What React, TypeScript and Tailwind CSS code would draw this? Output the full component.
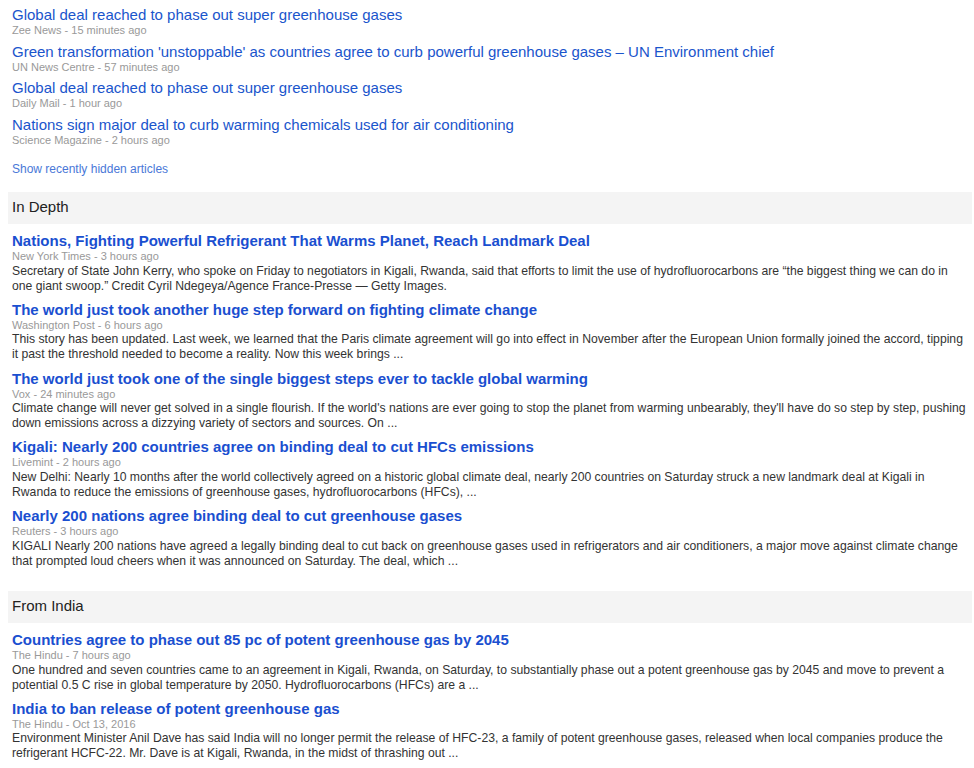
import React from 'react';

type Story = {
  title: string;
  source: string;
  time: string;
  snippet?: string;
};

const TOP: Story[] = [
  { title: 'Global deal reached to phase out super greenhouse gases', source: 'Zee News', time: '15 minutes ago' },
  {
    title: "Green transformation 'unstoppable' as countries agree to curb powerful greenhouse gases – UN Environment chief",
    source: 'UN News Centre',
    time: '57 minutes ago',
  },
  { title: 'Global deal reached to phase out super greenhouse gases', source: 'Daily Mail', time: '1 hour ago' },
  { title: 'Nations sign major deal to curb warming chemicals used for air conditioning', source: 'Science Magazine', time: '2 hours ago' },
];

const IN_DEPTH: Story[] = [
  {
    title: 'Nations, Fighting Powerful Refrigerant That Warms Planet, Reach Landmark Deal',
    source: 'New York Times',
    time: '3 hours ago',
    snippet:
      'Secretary of State John Kerry, who spoke on Friday to negotiators in Kigali, Rwanda, said that efforts to limit the use of hydrofluorocarbons are “the biggest thing we can do in one giant swoop.” Credit Cyril Ndegeya/Agence France-Presse — Getty Images.',
  },
  {
    title: 'The world just took another huge step forward on fighting climate change',
    source: 'Washington Post',
    time: '6 hours ago',
    snippet:
      'This story has been updated. Last week, we learned that the Paris climate agreement will go into effect in November after the European Union formally joined the accord, tipping it past the threshold needed to become a reality. Now this week brings ...',
  },
  {
    title: 'The world just took one of the single biggest steps ever to tackle global warming',
    source: 'Vox',
    time: '24 minutes ago',
    snippet:
      "Climate change will never get solved in a single flourish. If the world's nations are ever going to stop the planet from warming unbearably, they'll have do so step by step, pushing down emissions across a dizzying variety of sectors and sources. On ...",
  },
  {
    title: 'Kigali: Nearly 200 countries agree on binding deal to cut HFCs emissions',
    source: 'Livemint',
    time: '2 hours ago',
    snippet:
      'New Delhi: Nearly 10 months after the world collectively agreed on a historic global climate deal, nearly 200 countries on Saturday struck a new landmark deal at Kigali in Rwanda to reduce the emissions of greenhouse gases, hydrofluorocarbons (HFCs), ...',
  },
  {
    title: 'Nearly 200 nations agree binding deal to cut greenhouse gases',
    source: 'Reuters',
    time: '3 hours ago',
    snippet:
      'KIGALI Nearly 200 nations have agreed a legally binding deal to cut back on greenhouse gases used in refrigerators and air conditioners, a major move against climate change that prompted loud cheers when it was announced on Saturday. The deal, which ...',
  },
];

const FROM_INDIA: Story[] = [
  {
    title: 'Countries agree to phase out 85 pc of potent greenhouse gas by 2045',
    source: 'The Hindu',
    time: '7 hours ago',
    snippet:
      'One hundred and seven countries came to an agreement in Kigali, Rwanda, on Saturday, to substantially phase out a potent greenhouse gas by 2045 and move to prevent a potential 0.5 C rise in global temperature by 2050. Hydrofluorocarbons (HFCs) are a ...',
  },
  {
    title: 'India to ban release of potent greenhouse gas',
    source: 'The Hindu',
    time: 'Oct 13, 2016',
    snippet:
      'Environment Minister Anil Dave has said India will no longer permit the release of HFC-23, a family of potent greenhouse gases, released when local companies produce the refrigerant HCFC-22. Mr. Dave is at Kigali, Rwanda, in the midst of thrashing out ...',
  },
];

function Meta({ story, className }: { story: Story; className: string }) {
  return (
    <div className={`text-[11px] text-[#999] ${className}`}>
      {story.source} - {story.time}
    </div>
  );
}

function TopStory({ story }: { story: Story }) {
  return (
    <div className="mb-[4.5px]">
      <a href="#" className="block text-[15px] leading-[19px] text-[#1a55cc] whitespace-nowrap">
        {story.title}
      </a>
      <Meta story={story} className="leading-[13px]" />
    </div>
  );
}

function DepthStory({ story }: { story: Story }) {
  return (
    <div className="mb-[7.25px]">
      <a href="#" className="block text-[15px] font-bold leading-[17px] text-[#1a4fd0] whitespace-nowrap">
        {story.title}
      </a>
      <Meta story={story} className="leading-[14.5px]" />
      <div className="text-[12.2px] leading-[15px] text-[#333]">{story.snippet}</div>
    </div>
  );
}

function Section({ title, stories, className }: { title: string; stories: Story[]; className: string }) {
  return (
    <section className={className}>
      <div className="h-8 bg-[#f4f4f4] px-1 flex items-center text-[15px] text-[#222]">{title}</div>
      <div className="pt-[8.5px] px-1">
        {stories.map((s, i) => (
          <DepthStory key={i} story={s} />
        ))}
      </div>
    </section>
  );
}

export default function App() {
  return (
    <div className="w-[974px] h-[768px] overflow-hidden bg-white pl-2 pr-[2px] font-['Liberation_Sans',Arial,sans-serif]">
      <div className="pt-[5px] px-1">
        {TOP.map((s, i) => (
          <TopStory key={i} story={s} />
        ))}
        <a href="#" className="block mt-[14px] text-[12px] leading-[16px] text-[#4a78d8]">
          Show recently hidden articles
        </a>
      </div>
      <Section title="In Depth" stories={IN_DEPTH} className="mt-[15px]" />
      <Section title="From India" stories={FROM_INDIA} className="mt-[22px]" />
    </div>
  );
}
